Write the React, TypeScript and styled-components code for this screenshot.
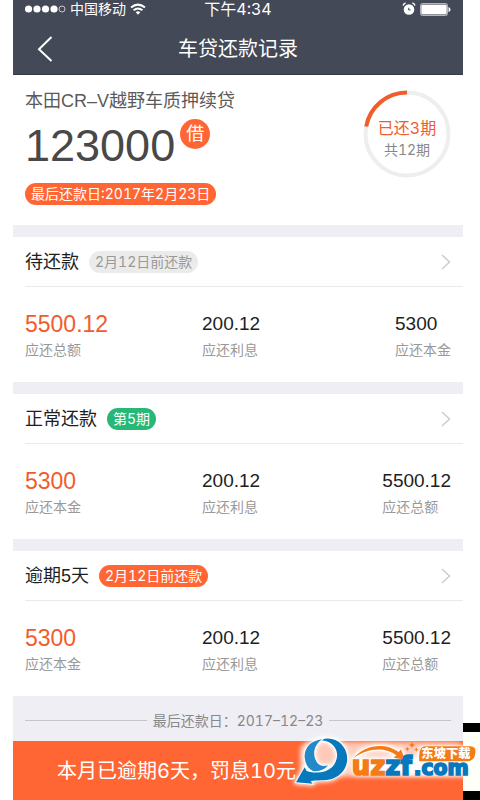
import React from "react";
import styled, { createGlobalStyle } from "styled-components";

const wideDigits = `
  font-family: Inter, "Noto Sans CJK SC", sans-serif;
  font-variant-numeric: tabular-nums;
`;

const GlobalStyle = createGlobalStyle`
  * { box-sizing: border-box; }
  body {
    margin: 0;
    background: #fff;
    color: #1e1e1e;
    font-family: "Liberation Sans", "Noto Sans CJK SC", sans-serif;
  }
  h1, h2, p, dl, dd, dt { margin: 0; font-weight: 400; }
  button { font: inherit; border: 0; background: none; padding: 0; cursor: pointer; }
`;

const Page = styled.div`
  display: grid;
  grid-template-columns: 13px minmax(0, 1fr) 17px;
  position: relative;
`;
const Phone = styled.main`
  grid-column: 2;
`;
const Edge = styled.div`
  grid-column: 3;
  display: flex;
  flex-direction: column;
  justify-content: flex-end;
`;
const EdgeBar = styled.div`
  height: 9px;
  background: #000;
`;
const EdgeSpace = styled.div`
  height: 59px;
  background: #fffffa;
`;

const Header = styled.header`
  background: #434956;
  border-bottom: 1px solid #343a48;
  color: #fff;
`;
const StatusBar = styled.div`
  display: grid;
  grid-template-columns: 1fr auto 1fr;
  align-items: center;
  height: 18px;
  padding: 0 12px;
`;
const Carrier = styled.div`
  display: flex;
  align-items: center;
  gap: 4px;
  font-size: 14px;
  line-height: 18px;
`;
const Clock = styled.time`
  ${wideDigits}
  font-size: 16px;
  line-height: 18px;
`;
const StatusIcons = styled.div`
  display: flex;
  justify-content: flex-end;
  align-items: center;
  gap: 4px;
`;
const NavBar = styled.div`
  display: grid;
  grid-template-columns: 64px 1fr 64px;
  align-items: center;
  height: 56px;
  padding-top: 5px;
`;
const BackButton = styled.button`
  display: flex;
  justify-content: center;
  color: #fff;
`;
const Title = styled.h1`
  font-size: 20px;
  line-height: 28px;
  text-align: center;
`;

const Summary = styled.section`
  display: flex;
  justify-content: space-between;
  align-items: flex-start;
  height: 150px;
  padding: 14px 12px 0;
`;
const LoanName = styled.h2`
  font-size: 18px;
  line-height: 24px;
  color: #5a5a5a;
`;
const AmountRow = styled.div`
  display: flex;
  align-items: flex-start;
  gap: 5px;
  height: 70px;
  padding-top: 6px;
`;
const Amount = styled.p`
  font-size: 45px;
  line-height: 54px;
  color: #484848;
`;
const LoanMark = styled.span`
  display: grid;
  place-items: center;
  width: 30px;
  height: 30px;
  border-radius: 50%;
  background: #ff6633;
  color: #fff;
  font-size: 18px;
  line-height: 28px;
`;
type Tone = "orange" | "green" | "grey";
const toneFill = { orange: "#ff6633", green: "#27b878", grey: "#ebebeb" };
const Pill = styled.span<{ $tone: Tone }>`
  ${wideDigits}
  display: inline-block;
  height: 22px;
  padding: 0 6px;
  border-radius: 11px;
  background: ${(p) => toneFill[p.$tone]};
  color: ${(p) => (p.$tone === "grey" ? "#999" : "#fff")};
  font-size: 14px;
  line-height: 22px;
  white-space: nowrap;
`;

const Progress = styled.div`
  display: grid;
  place-items: center;
  width: 88px;
  height: 88px;
  margin-top: 1px;
`;
const Ring = styled.svg`
  grid-area: 1 / 1;
`;
const ProgressText = styled.div`
  ${wideDigits}
  grid-area: 1 / 1;
  padding-top: 9px;
  text-align: center;
`;
const Repaid = styled.p`
  font-size: 16px;
  line-height: 22px;
  color: #f15c2c;
`;
const Total = styled.p`
  font-size: 14px;
  line-height: 22px;
  color: #888;
`;

const Card = styled.section`
  border-top: 12px solid #efeef4;
  height: 157px;
`;
const CardHead = styled.button`
  display: flex;
  align-items: center;
  gap: 10px;
  width: calc(100% - 12px);
  height: 50px;
  margin-left: 12px;
  padding-right: 12px;
  border-bottom: 1px solid #e9e9eb;
  color: #1e1e1e;
`;
const CardTitle = styled.span`
  font-size: 18px;
  line-height: 26px;
`;
const Arrow = styled.svg`
  margin-left: auto;
`;
const Stats = styled.dl`
  display: grid;
  grid-template-columns: 177px 1fr auto;
  padding: 23px 12px 0;
`;
const Stat = styled.div`
  display: flex;
  flex-direction: column-reverse;
`;
const StatLabel = styled.dt`
  font-size: 14px;
  line-height: 24px;
  color: #999;
`;
const StatValue = styled.dd<{ $main?: boolean }>`
  font-size: ${(p) => (p.$main ? 23 : 19)}px;
  line-height: 28px;
  color: ${(p) => (p.$main ? "#f15c2c" : "#1e1e1e")};
`;

const Deadline = styled.div`
  ${wideDigits}
  display: flex;
  align-items: center;
  gap: 6px;
  height: 45px;
  padding: 4px 12px 0;
  background: #efeef4;
  color: #888;
  font-size: 14px;
  line-height: 24px;
  white-space: nowrap;
`;
const Rule = styled.span`
  flex: 1;
  height: 1px;
  background: #c6c6ca;
`;
const PayButton = styled.button`
  ${wideDigits}
  display: block;
  width: 100%;
  height: 59px;
  padding-left: 44px;
  background: #ff6633;
  color: #fff;
  font-size: 20px;
  line-height: 58px;
  text-align: left;
  white-space: nowrap;
`;
const Watermark = styled.svg`
  position: absolute;
  right: 0;
  bottom: 0;
  pointer-events: none;
`;

type Item = { value: string; label: string };
type Plan = { title: string; tag: string; tone: Tone; items: Item[] };

const total: Item = { value: "5500.12", label: "应还总额" };
const interest: Item = { value: "200.12", label: "应还利息" };
const principal: Item = { value: "5300", label: "应还本金" };

const plans: Plan[] = [
  { title: "待还款", tag: "2月12日前还款", tone: "grey", items: [total, interest, principal] },
  { title: "正常还款", tag: "第5期", tone: "green", items: [principal, interest, total] },
  { title: "逾期5天", tag: "2月12日前还款", tone: "orange", items: [principal, interest, total] },
];

function Signal() {
  return (
    <svg width="41" height="10" viewBox="0 0 41 10" aria-hidden="true">
      {[3.5, 12, 20.5, 29].map((x) => (
        <circle key={x} cx={x} cy="5" r="3.6" fill="#fff" />
      ))}
      <circle cx="37" cy="5" r="3" fill="none" stroke="#c7cad0" strokeWidth="1" />
    </svg>
  );
}

function Wifi() {
  return (
    <svg width="16" height="12" viewBox="0 0 16 12" fill="none" stroke="#fff" strokeWidth="2" aria-hidden="true">
      <path d="M1 4.5Q8-1.3 15 4.5M3.6 7.3Q8 3.6 12.4 7.3" />
      <path d="M5.7 9.2Q8 7.4 10.3 9.2L8 11.7Z" fill="#fff" stroke="none" />
    </svg>
  );
}

function Alarm() {
  return (
    <svg width="14" height="14" viewBox="0 0 14 14" aria-hidden="true">
      <circle cx="7" cy="7.5" r="5.3" fill="#fff" />
      <path d="M1 3.6Q1.4 1.6 3.6 1M13 3.6Q12.6 1.6 10.4 1" fill="none" stroke="#fff" strokeWidth="1.3" />
      <path d="M6.7 5.8V8H8.6" fill="none" stroke="#434956" strokeWidth="1" />
    </svg>
  );
}

function Battery() {
  return (
    <svg width="31" height="13" viewBox="0 0 31 13" aria-hidden="true">
      <rect x="0.5" y="0.5" width="27" height="12" rx="2" fill="#8e929a" stroke="#b4b7bd" />
      <rect x="1.5" y="2" width="25" height="9" rx="1" fill="#fff" />
      <path d="M28.5 4Q30.5 4.5 30.5 6.5T28.5 9Z" fill="#fff" />
    </svg>
  );
}

const SWOOSH =
  "M78 96C105 76 150 84 165 118C181 152 168 190 128 206C105 214 80 208 62 214L68 221L18 217L44 172L50 183C80 192 108 188 126 172C146 150 148 118 122 100C106 89 92 90 78 96Z";
const CRESCENT =
  "M96 88C62 92 42 114 44 143C46 161 54 176 70 184C92 184 104 178 114 166C100 171 88 168 80 156C66 132 72 106 96 88Z";
const ARC = "M190 145C220 106 285 94 326 126L333 118L345 149L311 143L319 136C284 109 230 115 190 145Z";

function SiteMark() {
  return (
    <Watermark width="190" height="90" viewBox="0 0 570 270" role="img" aria-label="东坡下载 uzzf.com">
      <defs>
        <filter id="glow" x="-10%" y="-20%" width="120%" height="140%">
          <feGaussianBlur stdDeviation="7" />
        </filter>
      </defs>
      <g filter="url(#glow)" fill="#fff" stroke="#fff" strokeWidth="12" strokeLinejoin="round">
        <rect x="36" y="102" width="480" height="92" rx="20" opacity="0.65" />
        <path d={SWOOSH} />
        <path d={CRESCENT} />
        <path d={ARC} />
        <rect x="190" y="146" width="342" height="48" rx="10" />
        <rect x="386" y="116" width="160" height="34" rx="12" />
      </g>
      <path d={SWOOSH} fill="#0878bd" stroke="#fff" strokeWidth="5" paintOrder="stroke" />
      <path d={CRESCENT} fill="#2389c9" stroke="#fff" strokeWidth="5" paintOrder="stroke" />
      <path d={ARC} fill="#f47b16" stroke="#fff" strokeWidth="5" paintOrder="stroke" />
      <g fontFamily="DejaVu Sans, sans-serif" fontWeight="700" strokeWidth="5">
        <text x="185" y="194" fontSize="78">
          <tspan fill="#f47b16" stroke="#f47b16">uz</tspan>
          <tspan fill="#0878bd" stroke="#0878bd">zf</tspan>
        </text>
        <text x="371" y="194" fontSize="61" fill="#0878bd" stroke="#0878bd">.com</text>
      </g>
      <path d="M366 95l3 7 7 3-7 3-3 7-3-7-7-3 7-3ZM352 110l2 5 5 2-5 2-2 5-2-5-5-2 5-2ZM379 112l2 5 5 2-5 2-2 5-2-5-5-2 5-2Z" fill="#f47b16" />
      <path d="M406 109H540Q560 109 556 130Q553 154 532 154H388Q384 109 406 109Z" fill="#f47b16" stroke="#fff" strokeWidth="4" paintOrder="stroke" />
      <text x="394" y="145" fontFamily="Noto Sans CJK SC, sans-serif" fontSize="37" fontWeight="900" fill="#fff">东坡下载</text>
    </Watermark>
  );
}

export default function App() {
  return (
    <>
      <GlobalStyle />
      <Page>
        <Phone>
          <Header>
            <StatusBar>
              <Carrier>
                <Signal />
                <span>中国移动</span>
                <Wifi />
              </Carrier>
              <Clock>下午4:34</Clock>
              <StatusIcons>
                <Alarm />
                <Battery />
              </StatusIcons>
            </StatusBar>
            <NavBar>
              <BackButton aria-label="返回">
                <svg width="16" height="26" viewBox="0 0 16 26" fill="none" stroke="#fff" strokeWidth="2">
                  <path d="M14.5 1L2 13.2L14.5 25" />
                </svg>
              </BackButton>
              <Title>车贷还款记录</Title>
            </NavBar>
          </Header>

          <Summary>
            <div>
              <LoanName>本田CR–V越野车质押续贷</LoanName>
              <AmountRow>
                <Amount>123000</Amount>
                <LoanMark>借</LoanMark>
              </AmountRow>
              <Pill $tone="orange">最后还款日:2017年2月23日</Pill>
            </div>
            <Progress>
              <Ring width="88" height="88" viewBox="0 0 88 88" fill="none" aria-hidden="true">
                <circle cx="44" cy="44" r="41.5" stroke="#eee" strokeWidth="4" />
                <path d="M44 2.5A41.5 41.5 0 0 0 3.2 36.5" stroke="#f15c2c" strokeWidth="4" />
              </Ring>
              <ProgressText>
                <Repaid>已还3期</Repaid>
                <Total>共12期</Total>
              </ProgressText>
            </Progress>
          </Summary>

          {plans.map((plan) => (
            <Card key={plan.title}>
              <CardHead>
                <CardTitle>{plan.title}</CardTitle>
                <Pill $tone={plan.tone}>{plan.tag}</Pill>
                <Arrow width="10" height="16" viewBox="0 0 10 16" fill="none" stroke="#ccc" strokeWidth="1.5" aria-hidden="true">
                  <path d="M1 1L8.5 8L1 15" />
                </Arrow>
              </CardHead>
              <Stats>
                {plan.items.map((item, i) => (
                  <Stat key={item.label}>
                    <StatLabel>{item.label}</StatLabel>
                    <StatValue $main={i === 0}>{item.value}</StatValue>
                  </Stat>
                ))}
              </Stats>
            </Card>
          ))}

          <Deadline>
            <Rule />
            <span>最后还款日：2017–12–23</span>
            <Rule />
          </Deadline>
          <PayButton>本月已逾期6天，罚息10元</PayButton>
        </Phone>
        <Edge aria-hidden="true">
          <EdgeBar />
          <EdgeSpace />
          <EdgeBar />
        </Edge>
        <SiteMark />
      </Page>
    </>
  );
}
